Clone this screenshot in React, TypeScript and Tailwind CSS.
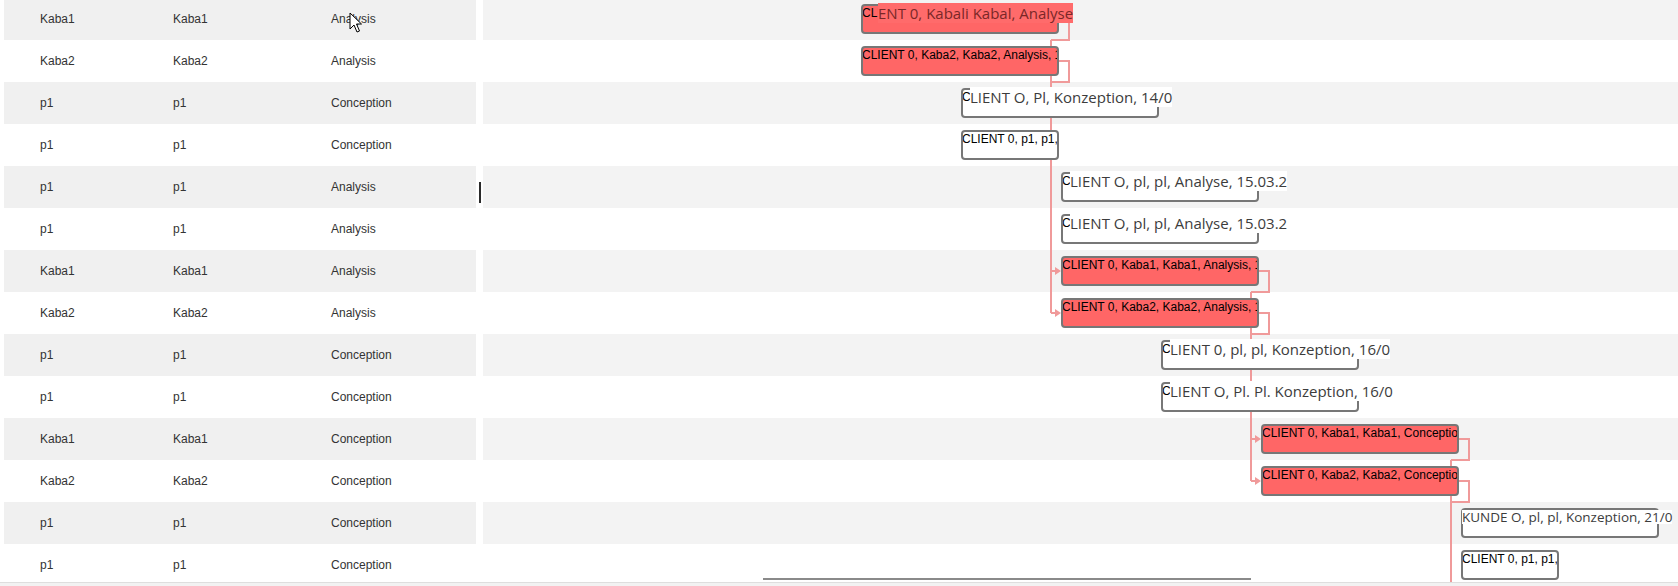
import React from 'react';

type Bar = {
  row: number;
  x: number;
  w: number;
  red: boolean;
  text: string;
  big?: string;
  bigAt?: number;
};

const rows: [string, string, string][] = [
  ['Kaba1', 'Kaba1', 'Analysis'],
  ['Kaba2', 'Kaba2', 'Analysis'],
  ['p1', 'p1', 'Conception'],
  ['p1', 'p1', 'Conception'],
  ['p1', 'p1', 'Analysis'],
  ['p1', 'p1', 'Analysis'],
  ['Kaba1', 'Kaba1', 'Analysis'],
  ['Kaba2', 'Kaba2', 'Analysis'],
  ['p1', 'p1', 'Conception'],
  ['p1', 'p1', 'Conception'],
  ['Kaba1', 'Kaba1', 'Conception'],
  ['Kaba2', 'Kaba2', 'Conception'],
  ['p1', 'p1', 'Conception'],
  ['p1', 'p1', 'Conception'],
];

// x is relative to the chart panel (starts at 483px)
const bars: Bar[] = [
  { row: 0, x: 378, w: 198, red: true, text: 'CLIENT 0, Kaba1, Kaba1, Analysis, 1', big: 'ENT 0, Kabali Kabal, Analyse', bigAt: 17 },
  { row: 1, x: 378, w: 198, red: true, text: 'CLIENT 0, Kaba2, Kaba2, Analysis, 1' },
  { row: 2, x: 478, w: 198, red: false, text: 'CLIENT 0, p1, p1, Conception, 14/0', big: 'LIENT O, Pl, Konzeption, 14/0', bigAt: 9 },
  { row: 3, x: 478, w: 98, red: false, text: 'CLIENT 0, p1, p1, Conception' },
  { row: 4, x: 578, w: 198, red: false, text: 'CLIENT 0, p1, p1, Analysis, 15.03.2', big: 'LIENT O, pl, pl, Analyse, 15.03.2', bigAt: 9 },
  { row: 5, x: 578, w: 198, red: false, text: 'CLIENT 0, p1, p1, Analysis, 15.03.2', big: 'LIENT O, pl, pl, Analyse, 15.03.2', bigAt: 9 },
  { row: 6, x: 578, w: 198, red: true, text: 'CLIENT 0, Kaba1, Kaba1, Analysis, 1' },
  { row: 7, x: 578, w: 198, red: true, text: 'CLIENT 0, Kaba2, Kaba2, Analysis, 1' },
  { row: 8, x: 678, w: 198, red: false, text: 'CLIENT 0, p1, p1, Conception, 16/0', big: 'LIENT 0, pl, pl, Konzeption, 16/0', bigAt: 9 },
  { row: 9, x: 678, w: 198, red: false, text: 'CLIENT 0, p1, p1, Conception, 16/0', big: 'LIENT O, Pl. Pl. Konzeption, 16/0', bigAt: 9 },
  { row: 10, x: 778, w: 198, red: true, text: 'CLIENT 0, Kaba1, Kaba1, Conception' },
  { row: 11, x: 778, w: 198, red: true, text: 'CLIENT 0, Kaba2, Kaba2, Conception' },
  { row: 12, x: 978, w: 198, red: false, text: 'CLIENT 0, p1, p1, Conception, 21/0', big: 'KUNDE O, pl, pl, Konzeption, 21/0', bigAt: 0 },
  { row: 13, x: 978, w: 98, red: false, text: 'CLIENT 0, p1, p1, Conception' },
];

const links = [
  'M576 19 H586 V40 H568',
  'M576 61 H586 V82 H568',
  'M568 40 V313',
  'M568 271 H574',
  'M568 313 H574',
  'M776 271 H786 V292 H768',
  'M776 313 H786 V334 H768',
  'M768 292 V481',
  'M768 439 H774',
  'M768 481 H774',
  'M976 439 H986 V460 H968',
  'M976 481 H986 V502 H968',
  'M968 460 V600',
];

const arrows = [
  [578, 271],
  [578, 313],
  [778, 439],
  [778, 481],
];

const App: React.FC = () => {
  return (
    <div className="relative w-[1678px] h-[586px] overflow-hidden bg-white font-['Liberation_Sans',Arial,sans-serif]">
      <div className="flex h-[582px] overflow-hidden">
        {/* Grid columns */}
        <div className="ml-[4px] w-[472px] shrink-0">
          <div className="-mt-[2px]">
            {rows.map((r, i) => (
              <div
                key={i}
                className={`grid grid-cols-[133px_158px_1fr] items-center h-[42px] pl-[36px] text-[12px] text-[#333] ${
                  i % 2 === 0 ? 'bg-[#f0f0f0]' : 'bg-white'
                }`}
              >
                <span>{r[0]}</span>
                <span>{r[1]}</span>
                <span>{r[2]}</span>
              </div>
            ))}
          </div>
        </div>

        {/* Splitter */}
        <div className="w-[7px] shrink-0 pt-[182px] pl-[3px]">
          <div className="w-[2px] h-[21px] bg-[#2a2a2a]" />
        </div>

        {/* Chart */}
        <div className="relative flex-1 overflow-hidden">
          <div className="-mt-[2px]">
            {rows.map((_, i) => (
              <div key={i} className={`h-[42px] ${i % 2 === 0 ? 'bg-[#f3f3f3]' : 'bg-white'}`} />
            ))}
          </div>

          <svg className="absolute left-0 top-0" width="1195" height="600">
            {links.map((d, i) => (
              <path key={i} d={d} fill="none" stroke="#f09a9a" strokeWidth="2" />
            ))}
            {arrows.map(([x, y], i) => (
              <polygon key={i} points={`${x - 6},${y - 4} ${x},${y} ${x - 6},${y + 4}`} fill="#f09a9a" />
            ))}
          </svg>

          {bars.map((b, i) => (
            <div
              key={i}
              className="absolute h-[30px]"
              style={{ left: b.x, top: 4 + b.row * 42, width: b.w }}
            >
              <div
                className={`h-full rounded-[4px] border-2 border-[#777] overflow-hidden whitespace-nowrap text-[12px] leading-[14px] text-black ${
                  b.red ? 'bg-[#ff6666]' : 'bg-white'
                }`}
              >
                <span className="-ml-px">{b.text}</span>
              </div>
              {b.big && (
                <span
                  className={`absolute whitespace-nowrap font-['Open_Sans',sans-serif] ${
                    b.red ? 'bg-[#ff6b6b] text-[#7a2727]' : 'bg-white text-[#3c3c3c]'
                  } ${
                    b.bigAt === 0
                      ? 'top-[2px] h-[14px] leading-[14px] text-[13.5px]'
                      : '-top-[1px] h-[20px] leading-[20px] text-[15px]'
                  }`}
                  style={{ left: b.bigAt === 0 ? 1 : b.bigAt }}
                >
                  {b.big}
                </span>
              )}
            </div>
          ))}

          {/* horizontal scroll thumb */}
          <div className="absolute left-[280px] top-[578px] w-[488px] h-[2px] bg-[#8a8a8a]" />
        </div>
      </div>
      <div className="h-[4px] bg-[#f2f2f2] border-t border-[#dedede]" />

      {/* mouse pointer */}
      <svg className="absolute left-[349px] top-[12px]" width="14" height="22" viewBox="0 0 14 22">
        <path d="M1 1 L1 17 L5 13 L8 20 L10.5 19 L7.5 12 L12.5 12 Z" fill="#fff" stroke="#000" strokeWidth="1" strokeLinejoin="round" />
      </svg>
    </div>
  );
};

export default App;
